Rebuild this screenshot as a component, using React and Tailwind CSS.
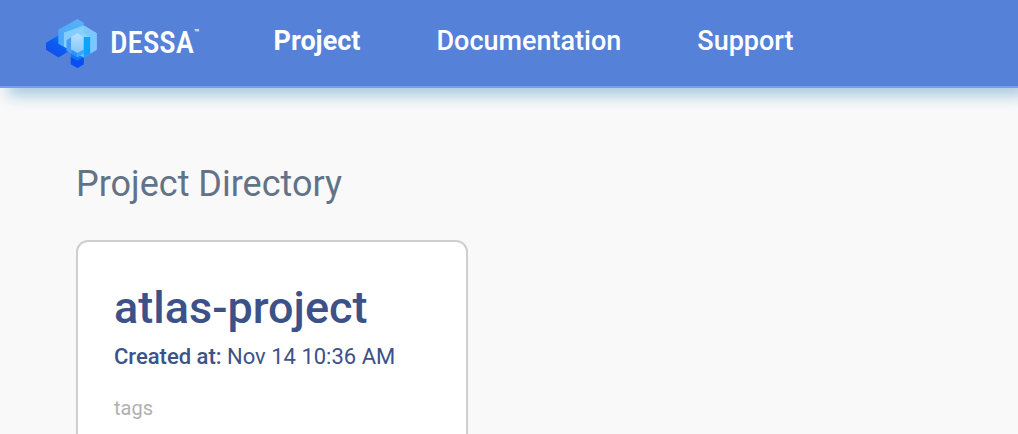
function LogoMark() {
  return (
    <svg viewBox="28 22 158 154" className="h-[51px] w-[53px] shrink-0" aria-hidden="true">
      <defs>
        <linearGradient id="left" x1="0" y1="1" x2="1" y2="0">
          <stop offset="0" stopColor="#1448e6" />
          <stop offset="0.5" stopColor="#0a5cf2" />
          <stop offset="1" stopColor="#0a8cfa" />
        </linearGradient>
        <linearGradient id="top" x1="1" y1="0" x2="0" y2="1">
          <stop offset="0" stopColor="#58b2f8" />
          <stop offset="1" stopColor="#4aa6fb" />
        </linearGradient>
        <linearGradient id="right" x1="0" y1="0" x2="1" y2="1">
          <stop offset="0" stopColor="#7cc8fc" />
          <stop offset="0.5" stopColor="#8ad2fe" />
          <stop offset="1" stopColor="#58b8fd" />
        </linearGradient>
        <linearGradient id="core" x1="0" y1="0" x2="0" y2="1">
          <stop offset="0" stopColor="#b8e0fe" />
          <stop offset="1" stopColor="#7cc0fd" />
        </linearGradient>
      </defs>
      <path d="M30 97 68 74 106 97V118L68 141 30 118Z" fill="url(#left)" />
      <path d="M105 125H144V162L125 173 105 162Z" fill="#0a78fa" />
      <path d="M105 140 125 151 144 140V162L125 173 105 162Z" fill="#0b4df0" />
      <path d="M68 57 125 25 144 36V117L125 128 68 100Z" fill="url(#top)" />
      <path d="M68 57 84 66V109L68 100Z" fill="#4ba8fa" />
      <path d="M84 66 144 45 183 68V118L144 141 84 109Z" fill="url(#right)" />
      <path d="M92 89 106 80V129L92 121Z" fill="#459cf8" />
      <path d="M106 79 125 68 144 79V129L125 140 106 129Z" fill="url(#core)" />
      <path d="M106 117 125 128V140L106 129Z" fill="#2f8efb" />
      <path d="M125 128 144 117V129L125 140Z" fill="#38a4fd" />
      <path d="M144 79H164V129L144 141Z" fill="#0ea2ff" />
      <path d="M144 45 183 68V118L164 129V79L144 67Z" fill="#7cc8fe" />
    </svg>
  );
}

function Logo() {
  return (
    <a href="#home" aria-label="Dessa" className="flex items-center text-white">
      <LogoMark />
      <span className="ml-3 flex items-start font-['Roboto_Condensed','Liberation_Sans_Narrow','Roboto',sans-serif] text-[31px] leading-10 font-medium">
        DESSA
        <span className="text-[10px] leading-5">™</span>
      </span>
    </a>
  );
}

function Header() {
  return (
    <header className="flex h-22 items-center border-b-2 border-[#7c9eea] bg-[#5581d8] pl-[45px] shadow-[8px_8px_14px_#a9cbe2]">
      <Logo />
      <nav className="ml-[74px] flex items-center gap-[76px] pb-1 text-[27px] leading-8 text-white">
        <a href="#project" aria-current="page" className="font-bold">Project</a>
        <a href="#documentation" className="font-medium">Documentation</a>
        <a href="#support" className="font-medium">Support</a>
      </nav>
    </header>
  );
}

function ProjectCard() {
  return (
    <article className="w-full max-w-[392px] rounded-xl border-2 border-[#cfcfcf] bg-white px-9 pt-9 pb-10 text-[#3c5188]">
      <h2 className="text-[45px] leading-15 font-medium">atlas-project</h2>
      <p className="mt-1 text-[22px] leading-[30px]">
        <span className="font-medium">Created at:</span> Nov 14 10:36 AM
      </p>
      <p className="mt-6 text-[20px] leading-6 text-[#b0b0b0]">tags</p>
    </article>
  );
}

export default function App() {
  return (
    <div className="min-h-screen bg-[#f9f9f9] font-['Roboto',sans-serif]">
      <Header />
      <main className="px-[76px] pt-18">
        <h1 className="text-[36px] leading-12 text-[#637387]">Project Directory</h1>
        <section className="mt-8">
          <ProjectCard />
        </section>
      </main>
    </div>
  );
}
